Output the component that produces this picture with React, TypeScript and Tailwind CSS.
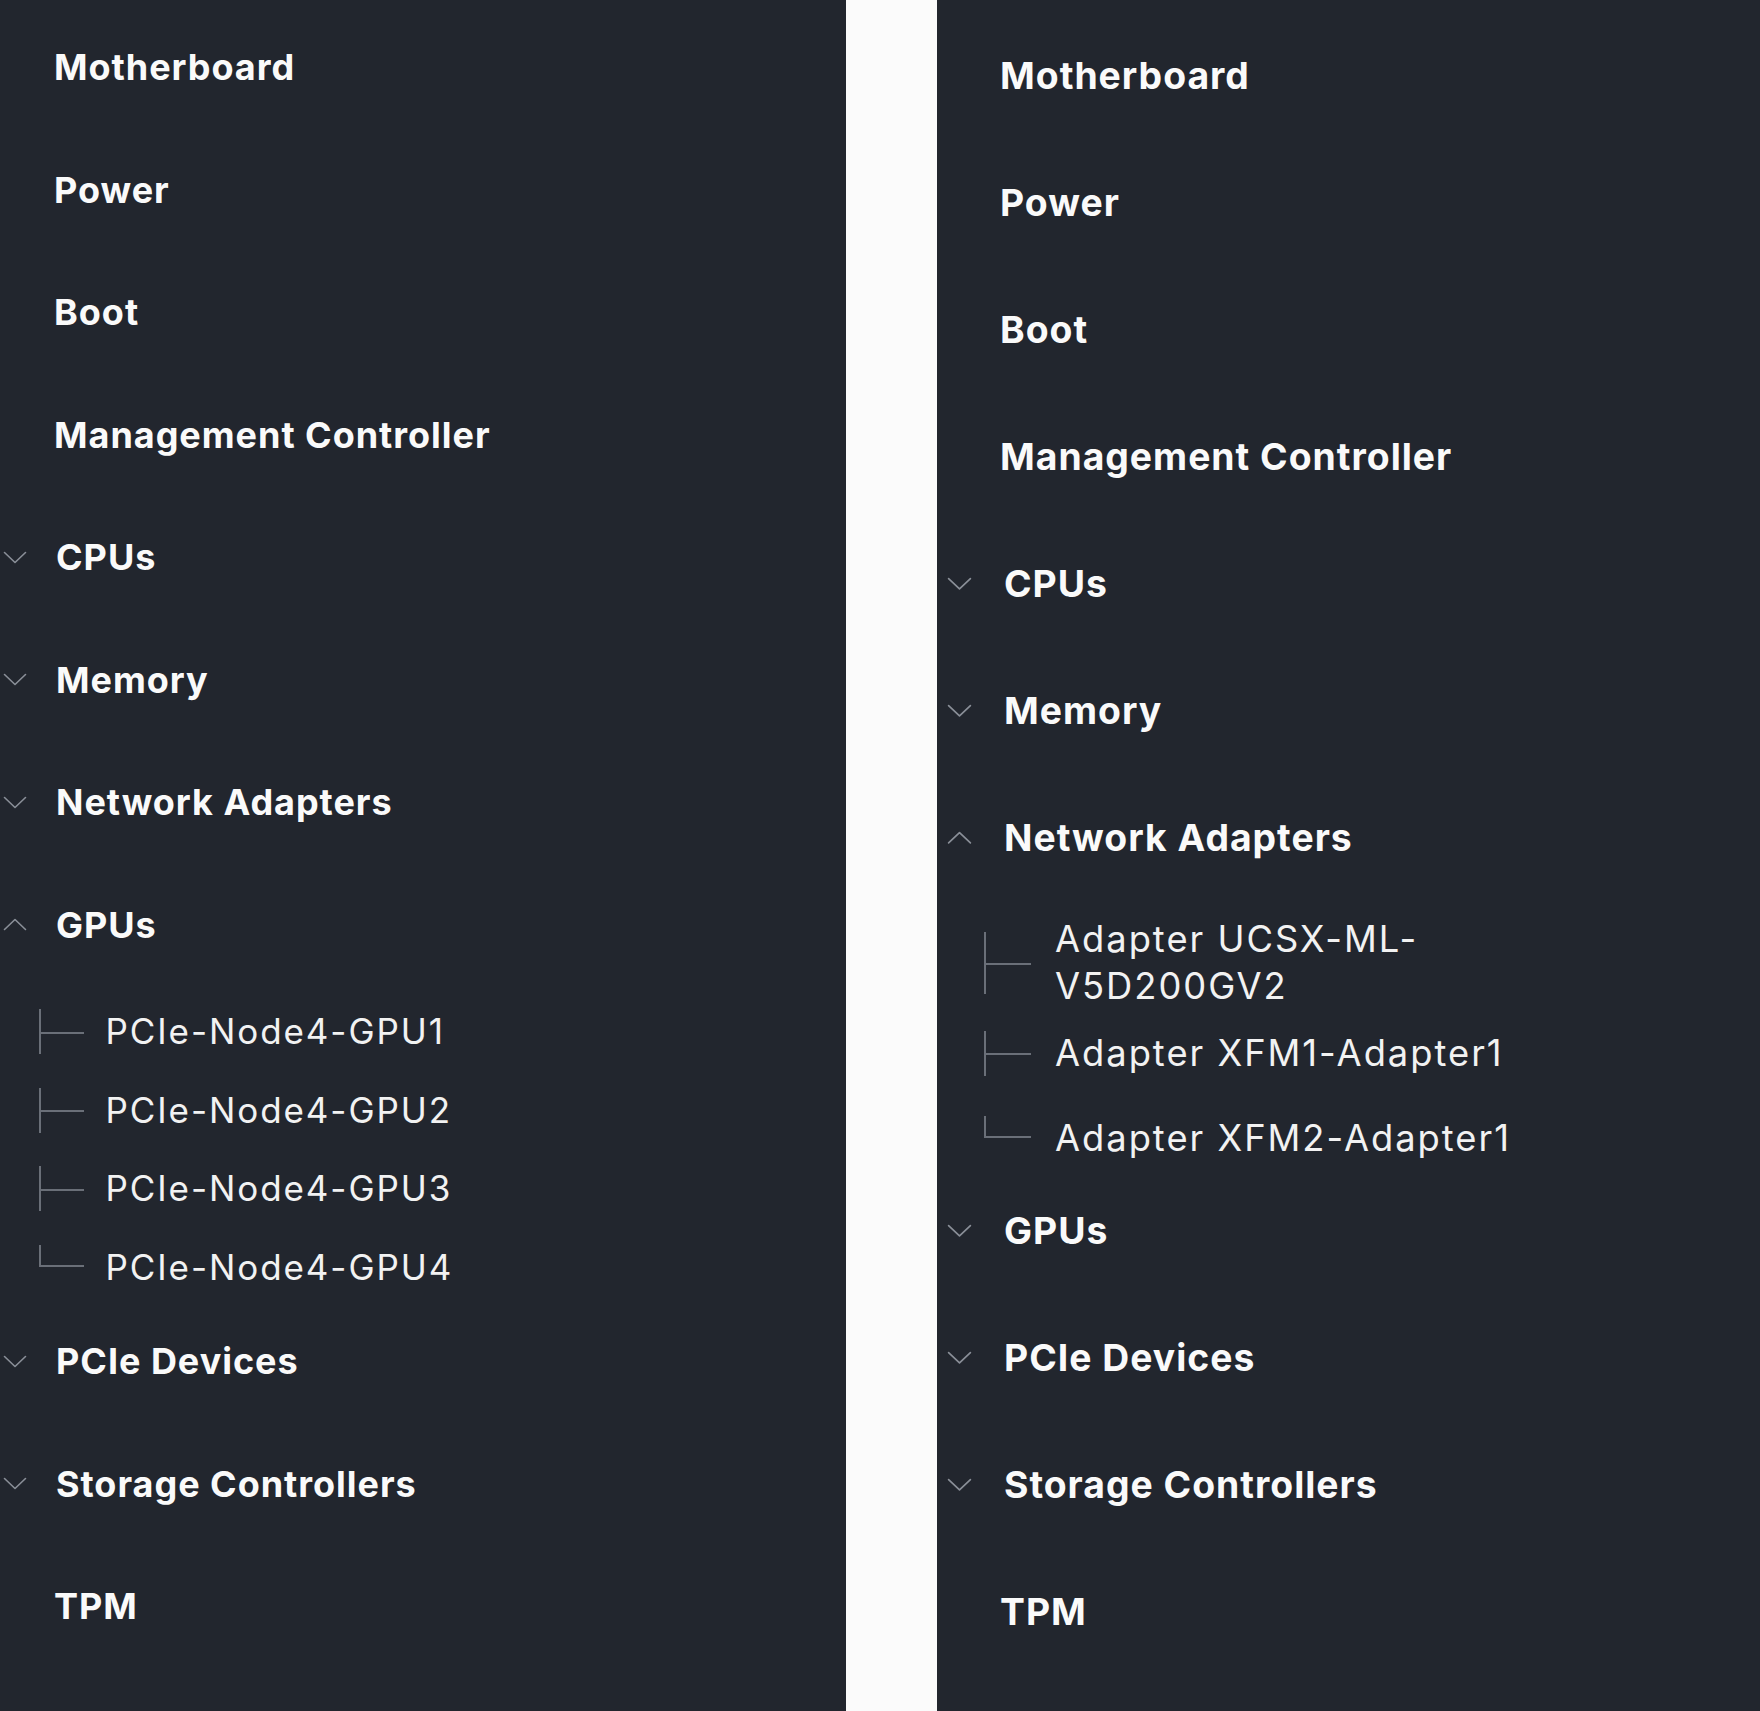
import React from "react";

type Child = { label: string; twoLine?: boolean };
type Item = { label: string; expandable?: boolean; open?: boolean; children?: Child[] };

type Theme = {
  panel: string;
  list: string;
  row: string;
  head: string;
  plain: string;
  chevBox: string;
  chev: string;
  kids: string;
  kidRow: string;
  kidRowTall: string;
  connector: string;
  line: string;
  lineTall: string;
  lineHalf: string;
  kidText: string;
};

const leftTheme: Theme = {
  panel: "w-[846px] text-[35px]",
  list: "pt-[6px]",
  row: "h-[122.5px]",
  head: "text-[36px]",
  plain: "pl-[54px]",
  chevBox: "w-[56px] pl-[3px]",
  chev: "w-[24px] h-[13px]",
  kids: "mt-[6.5px] mb-[-6.5px]",
  kidRow: "min-h-[78.5px]",
  kidRowTall: "min-h-[94px]",
  connector: "w-[105.5px] pl-[38.5px]",
  line: "h-[45px] w-[45px]",
  lineTall: "h-[62px] w-[45px]",
  lineHalf: "h-[45px] w-[45px]",
  kidText: "max-w-[480px]",
};

const rightTheme: Theme = {
  panel: "flex-1 text-[36.3px]",
  list: "pt-[12.5px]",
  row: "h-[127px]",
  head: "text-[37.3px]",
  plain: "pl-[63px]",
  chevBox: "w-[67px] pl-[10px]",
  chev: "w-[25px] h-[13.5px]",
  kids: "mt-[13px] mb-[-13px]",
  kidRow: "min-h-[84.8px]",
  kidRowTall: "min-h-[96.4px]",
  connector: "w-[118px] pl-[47px]",
  line: "h-[45px] w-[47px]",
  lineTall: "h-[62px] w-[47px]",
  lineHalf: "h-[45px] w-[47px]",
  kidText: "max-w-[490px]",
};

const gpus: Child[] = [
  { label: "PCIe-Node4-GPU1" },
  { label: "PCIe-Node4-GPU2" },
  { label: "PCIe-Node4-GPU3" },
  { label: "PCIe-Node4-GPU4" },
];

const adapters: Child[] = [
  { label: "Adapter UCSX-ML-V5D200GV2", twoLine: true },
  { label: "Adapter XFM1-Adapter1" },
  { label: "Adapter XFM2-Adapter1" },
];

function buildTree(open: "gpus" | "net"): Item[] {
  return [
    { label: "Motherboard" },
    { label: "Power" },
    { label: "Boot" },
    { label: "Management Controller" },
    { label: "CPUs", expandable: true },
    { label: "Memory", expandable: true },
    {
      label: "Network Adapters",
      expandable: true,
      open: open === "net",
      children: open === "net" ? adapters : undefined,
    },
    {
      label: "GPUs",
      expandable: true,
      open: open === "gpus",
      children: open === "gpus" ? gpus : undefined,
    },
    { label: "PCIe Devices", expandable: true },
    { label: "Storage Controllers", expandable: true },
    { label: "TPM" },
  ];
}

function Chevron({ up, className }: { up?: boolean; className: string }) {
  return (
    <svg viewBox="0 0 24 13" className={className} fill="none">
      <polyline
        points={up ? "1.5,11.5 12,1.5 22.5,11.5" : "1.5,1.5 12,11.5 22.5,1.5"}
        stroke="#8a8f98"
        strokeWidth="1.6"
        strokeLinecap="round"
        strokeLinejoin="round"
      />
    </svg>
  );
}

function Connector({ last, tall, t }: { last: boolean; tall?: boolean; t: Theme }) {
  if (last) {
    return (
      <div className={`flex flex-col ${t.lineHalf}`}>
        <div className="h-1/2 w-full border-l-2 border-b-2 border-[#6a6f78]" />
      </div>
    );
  }
  return (
    <div className={`flex items-center border-l-2 border-[#6a6f78] ${tall ? t.lineTall : t.line}`}>
      <div className="h-[2px] w-full bg-[#6a6f78] translate-y-[1px]" />
    </div>
  );
}

function Tree({ t, open }: { t: Theme; open: "gpus" | "net" }) {
  const items = buildTree(open);
  return (
    <div className={`bg-[#22262e] h-full ${t.panel}`}>
      <ul className={`flex flex-col ${t.list}`}>
        {items.map((it) => (
          <li key={it.label} className="flex flex-col">
            <div className={`flex items-center ${t.row}`}>
              {it.expandable ? (
                <div className={`flex items-center shrink-0 ${t.chevBox}`}>
                  <Chevron up={it.open} className={t.chev} />
                </div>
              ) : (
                <div className={t.plain} />
              )}
              <span className={`font-bold leading-none text-[#fafafa] tracking-[0.027em] ${t.head}`}>
                {it.label}
              </span>
            </div>
            {it.children && (
              <ul className={`flex flex-col ${t.kids}`}>
                {it.children.map((c, i) => (
                  <li
                    key={c.label}
                    className={`flex items-center ${c.twoLine ? t.kidRowTall : t.kidRow}`}
                  >
                    <div className={`flex items-center shrink-0 ${t.connector}`}>
                      <Connector last={i === it.children!.length - 1} tall={c.twoLine} t={t} />
                    </div>
                    <span
                      className={`font-normal leading-[1.3] tracking-[0.055em] text-[#f2f2f2] ${t.kidText}`}
                    >
                      {c.label}
                    </span>
                  </li>
                ))}
              </ul>
            )}
          </li>
        ))}
      </ul>
    </div>
  );
}

export default function App() {
  return (
    <div
      className="flex w-[1760px] h-[1711px] bg-[#fbfbfb] overflow-hidden"
      style={{ fontFamily: 'Inter, "Noto Sans", "Liberation Sans", sans-serif' }}
    >
      <Tree t={leftTheme} open="gpus" />
      <div className="w-[91px] shrink-0" />
      <Tree t={rightTheme} open="net" />
    </div>
  );
}
